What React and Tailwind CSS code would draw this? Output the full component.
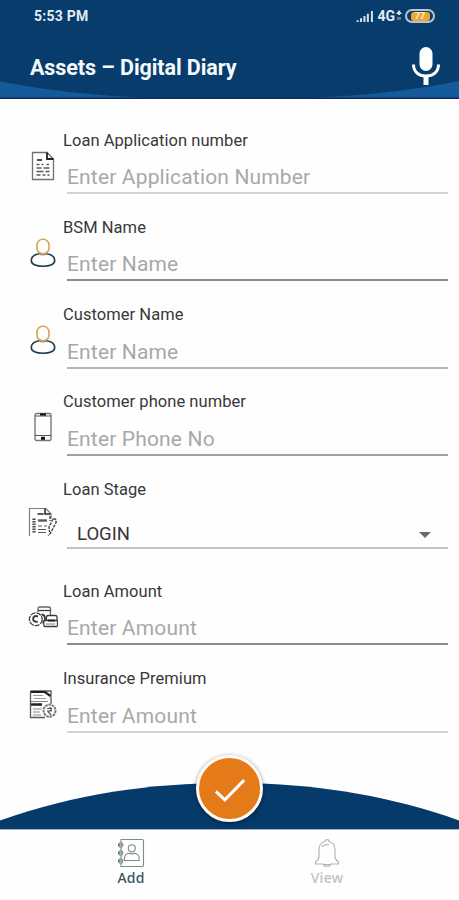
import React from 'react';
import clsx from 'clsx';

const INK = '#555b60';

function DocumentIcon() {
  return (
    <svg width="24" height="30" viewBox="0 0 24 30" fill="none" stroke={INK}>
      <path d="M1.500 1.500H16L22.500 8V28.500H1.500Z" strokeWidth="1.300" stroke="#6d7276" />
      <path d="M16 1.500V8H22.500" stroke="#222" strokeWidth="1.800" />
      <path d="M6 9h5" stroke="#222" strokeWidth="1.600" />
      <path d="M5.500 13.500h3m2 0h2m3 0h2.500M5.500 17h5m2 0h6M5.500 20.500h7m2 0h4M5.500 24h4m2 0h3m2 0h2" strokeWidth="1.300" />
    </svg>
  );
}

function PersonIcon() {
  return (
    <svg width="26" height="30" viewBox="0 0 26 30" fill="none" strokeWidth="1.600">
      <path d="M9.500 15.800C4 16.500 1.300 19.500 1.300 22.700c0 3.300 4.500 5.600 11.700 5.600s11.700-2.300 11.700-5.600c0-3.200-2.700-6.200-8.200-6.900" stroke="#1d3c50" />
      <path d="M9.500 14.500v1.300c1 .9 2 1.200 3.500 1.200s2.500-.3 3.500-1.200v-1.300" stroke="#8a8064" strokeWidth="1.200" />
      <rect x="7" y="1.300" width="12" height="14.400" rx="5.800" stroke="#d2a455" />
    </svg>
  );
}

function PhoneIcon() {
  return (
    <svg width="18" height="30" viewBox="0 0 18 30" fill="none" stroke={INK}>
      <rect x="1" y="1.500" width="16" height="27" rx="1.500" strokeWidth="1.400" stroke="#74797c" />
      <path d="M1 4h16M1 23.500h16" strokeWidth="1" />
      <path d="M6 2.500h6" stroke="#111" strokeWidth="2.200" />
      <path d="M7 26.300h4" stroke="#111" strokeWidth="3" />
    </svg>
  );
}

function StageIcon() {
  return (
    <svg width="30" height="30" viewBox="0 0 30 30" fill="none" stroke={INK}>
      <path d="M1.500 29V1.500H18L23 7v5" strokeWidth="1.200" stroke="#7d8184" />
      <path d="M17 1.500V7h5.500" stroke="#222" strokeWidth="1.500" />
      <path d="M9.500 7h6" stroke="#222" strokeWidth="1.500" />
      <path d="M6 11.500v15" stroke="#444" strokeWidth="3.200" strokeDasharray="1.600 .9" />
      <path d="M10 19h4m2 0h3M10 22.500h8M10 25.500h8" strokeWidth="1.200" />
      <path d="M10 13.500h9" strokeWidth="2.400" />
      <path d="M22 9v5M25.500 11.500c4 1 3 4 1 7l-4 7.500-2.500 2.500M25 12l-4 8 .5 5" stroke="#444" strokeWidth="1.400" strokeDasharray="3 1" />
    </svg>
  );
}

function CoinsIcon() {
  return (
    <svg width="30" height="22" viewBox="0 0 30 22" fill="none" stroke="#3c3c3c" strokeWidth="1.300">
      <path d="M10 6V2.500C10 1.500 11 1 12 1h8c1.500 0 2.500.5 2.500 1.500V9" stroke="#666" />
      <path d="M10 4.500h12.500" />
      <circle cx="7.800" cy="13.300" r="6.400" strokeDasharray="5 1" />
      <path d="M10 10.500c-3-1.500-5 0-4.800 2.800.2 2 2 3 4.500 2.200" strokeWidth="2" />
      <path d="M13.500 8.500c4 0 5 6.500 1 8.500" strokeWidth="1.800" />
      <path d="M18.500 14.500V11c0-1 .8-1.500 1.800-1.500h7c1 0 1.700.5 1.700 1.500v3.500" fill="#fff" />
      <path d="M17 14.500h11.500c.7 0 1 .4 1 1v4c0 .7-.4 1-1 1H17c-.8 0-1.200-.3-1.200-1v-4c0-.6.4-1 1.200-1Z" fill="#fff" />
      <path d="M20 14.500h7" stroke="#222" strokeWidth="2" />
      <path d="M18 18h9" stroke="#999" />
    </svg>
  );
}

function PremiumIcon() {
  return (
    <svg width="28" height="30" viewBox="0 0 28 30" fill="none" stroke={INK}>
      <path d="M1.500 2H22V15M1.500 2v26.500H16" strokeWidth="1.300" />
      <path d="M2 3h14l5.500 4" stroke="#222" strokeWidth="2.200" />
      <path d="M4 6.500h10M5 9.500h12" strokeWidth="1" stroke="#999" />
      <path d="M2 15.500h11" stroke="#222" strokeWidth="2.500" />
      <path d="M2 12.500h17M4 20h9M4 23h7M4 26h8" strokeWidth="1.100" stroke="#888" />
      <circle cx="20.500" cy="21.700" r="6" strokeWidth="2" strokeDasharray="2.500 .8" stroke="#777" />
      <path d="M18 19.500h5M18 22h5M19 22.500l3 3.500M20 18.500c3 0 3 3.500 0 3.500" strokeWidth="1.200" />
    </svg>
  );
}

function ContactBookIcon() {
  return (
    <svg width="28" height="30" viewBox="0 0 28 30" fill="none" stroke="#7b8d86" strokeWidth="1.100">
      <path d="M4 1.500H25c1 0 1.500.5 1.500 1.500V27c0 1-.5 1.500-1.500 1.500H4Z" />
      <circle cx="3.700" cy="7" r="2.100" fill="#fff" />
      <circle cx="3.700" cy="15" r="2.100" fill="#fff" />
      <circle cx="3.700" cy="23" r="2.100" fill="#fff" />
      <path d="M1 7h4M1 15h4M1 23h4" stroke="#40584f" />
      <circle cx="14.800" cy="10.300" r="3.500" />
      <path d="M7.500 22.500v-2.500c0-2.800 2-4.300 5-4.700 1.300.6 3.300.6 4.600 0 3 .4 5 1.900 5 4.700v2.500Z" />
    </svg>
  );
}

function BellIcon() {
  return (
    <svg width="26" height="30" viewBox="0 0 26 30" fill="none" stroke="#b4b4b4" strokeWidth="1.200">
      <path d="M11 3.500c0-2.500 4-2.500 4 0 4 1 6 4 6 8v7c0 3 1.500 4 3.500 5.500v2H17c-1 3-7 3-8 0H1.500v-2C3.500 22.500 5 21.500 5 18.500v-7c0-4 2-7 6-8Z" />
      <path d="M8 9c1-2 2.500-2.500 7-2.700M10 26.500h6" />
    </svg>
  );
}

const FIELDS = [
  { label: 'Loan Application number', placeholder: 'Enter Application Number', Icon: DocumentIcon, line: 'border-[#d3d3d3]' },
  { label: 'BSM Name', placeholder: 'Enter Name', Icon: PersonIcon, line: 'border-[#8c8c8c]' },
  { label: 'Customer Name', placeholder: 'Enter Name', Icon: PersonIcon, line: 'border-[#b5b5b5]' },
  { label: 'Customer phone number', placeholder: 'Enter Phone No', Icon: PhoneIcon, line: 'border-[#a0a0a0]' },
  { label: 'Loan Stage', value: 'LOGIN', Icon: StageIcon, line: 'border-[#c2c2c2]' },
  { label: 'Loan Amount', placeholder: 'Enter Amount', Icon: CoinsIcon, line: 'border-[#8c8c8c]' },
  { label: 'Insurance Premium', placeholder: 'Enter Amount', Icon: PremiumIcon, line: 'border-[#d3d3d3]' },
];

function Field({ label, placeholder, value, Icon, line }) {
  return (
    <div className={clsx('flex shrink-0', value ? 'h-[102.300px]' : 'h-[87.200px]')}>
      <div className={clsx('w-[35px] h-[30px] shrink-0 flex items-center justify-center', value ? 'mt-[27px]' : 'mt-[20px]')}>
        <Icon />
      </div>
      <div className="flex-1 pl-[3px]">
        <div className="h-5 leading-5 text-[16.5px] tracking-[0.05px] text-[#383838] whitespace-nowrap">{label}</div>
        {value ? (
          <div className={clsx('ml-1 h-[49px] pt-[23px] pl-[10px] pr-[17px] flex items-center justify-between border-b-2', line)}>
            <span className="text-[18.5px] text-[#363636]">{value}</span>
            <svg width="12" height="6" viewBox="0 0 12 6" fill="#6c6c6c">
              <path d="M0 0H12L6 6Z" />
            </svg>
          </div>
        ) : (
          <div className={clsx('ml-1 mt-[9.500px] h-[34px] leading-[34px] text-[21px] tracking-[0.16px] text-[#a8a8a8] border-b-2 whitespace-nowrap', line)}>
            {placeholder}
          </div>
        )}
      </div>
    </div>
  );
}

function StatusBar() {
  return (
    <div className="relative flex h-8 items-center justify-between pl-[34px] pr-[24px] text-[#e3edf4]">
      <span className="pt-px text-[14px] font-bold tracking-[0.25px]">5:53 PM</span>
      <div className="flex items-center">
        <svg width="18" height="12" viewBox="0 0 18 13" stroke="#d4e0ea" strokeWidth="2.200">
          <path d="M1 13v-2M4.700 13V9M8.400 13V6.500M12.100 13V4M16.500 13V1" />
        </svg>
        <span className="ml-[3px] text-[14px] font-bold leading-none">4G</span>
        <svg className="ml-px" width="6" height="12" viewBox="0 0 6 12" fill="#8faac0">
          <path d="M3 0L6 4H4V5H2V4H0Z" fill="#d4e0ea" />
          <path d="M1 7h4v3H1z" opacity=".6" />
        </svg>
        <div className="ml-[3px] flex h-[14px] w-[30px] items-center justify-center rounded-full border-2 border-[#b9c5cc]">
          <span className="flex h-[9px] w-[19px] items-center justify-center rounded-[3px] bg-[#eba634] text-[9px] font-bold leading-none text-[#fff0c8]">77</span>
        </div>
      </div>
    </div>
  );
}

export default function App() {
  return (
    <div className="flex h-[900px] w-[459px] flex-col overflow-hidden bg-[#fefefe] font-[Roboto,sans-serif]">
      <header className="relative h-[99px] shrink-0 bg-[#073c6d]">
        <svg className="absolute bottom-0 left-0" width="459" height="18" viewBox="0 0 459 18" fill="#155b99">
          <path d="M0 .5Q70 14 150 17H0Z" />
          <path d="M459 0Q389 14 309 17H459Z" />
          <path d="M0 17.200H459" stroke="#072c5c" strokeWidth="1.500" />
        </svg>
        <StatusBar />
        <div className="relative flex h-[67px] items-center justify-between pl-[30px] pr-[18px]">
          <h1 className="mt-[5px] text-[21.5px] font-bold tracking-[-0.080px] text-[#f6fafc]">Assets – Digital Diary</h1>
          <svg className="mt-px" width="30" height="38" viewBox="0 0 30 38" fill="none">
            <rect x="8.500" y="0" width="13" height="24" rx="6.500" fill="#fff" />
            <path d="M2.500 17.500C2.500 25 8 29 15 29s12.500-4 12.500-11.500" stroke="#fff" strokeWidth="3" />
            <path d="M15 29v9" stroke="#fff" strokeWidth="5" />
          </svg>
        </div>
      </header>

      <main className="flex h-[652px] shrink-0 flex-col pl-[25px] pr-[11px] pt-[31.800px]">
        {FIELDS.map((field) => (
          <Field key={field.label} {...field} />
        ))}
      </main>

      <section className="relative h-[78px] shrink-0 flex justify-center">
        <svg className="absolute bottom-0 left-0" width="459" height="48" viewBox="0 0 459 48">
          <path d="M0 39.500C75 13 150 2 229.500 2S384 13 459 39.500V48H0Z" fill="#053a6b" />
        </svg>
        <button className="relative mt-[4px] flex h-[67px] w-[67px] items-center justify-center rounded-full border-[3.500px] border-[#fffaf4] bg-[#e57a19] shadow-[0_1px_4px_rgba(0,0,0,0.45)]">
          <svg className="mt-[3px]" width="32" height="25" viewBox="0 0 34 26" fill="none" stroke="#fff" strokeWidth="3.200">
            <path d="M2 14L11.500 23L32 2" />
          </svg>
        </button>
      </section>

      <nav className="flex h-[71px] shrink-0 border-t border-[#9fb0c0] pl-[33px] pr-[34px]">
        <div className="flex flex-1 flex-col items-center pt-[8px]">
          <ContactBookIcon />
          <span className="font-['Noto_Sans',sans-serif] text-[14px] font-medium leading-5 tracking-[0.2px] text-[#345563]">Add</span>
        </div>
        <div className="flex flex-1 flex-col items-center pt-[8px]">
          <BellIcon />
          <span className="font-['Noto_Sans',sans-serif] text-[14px] font-medium leading-5 tracking-[0.3px] text-[#c2c2c2]">View</span>
        </div>
      </nav>
    </div>
  );
}
